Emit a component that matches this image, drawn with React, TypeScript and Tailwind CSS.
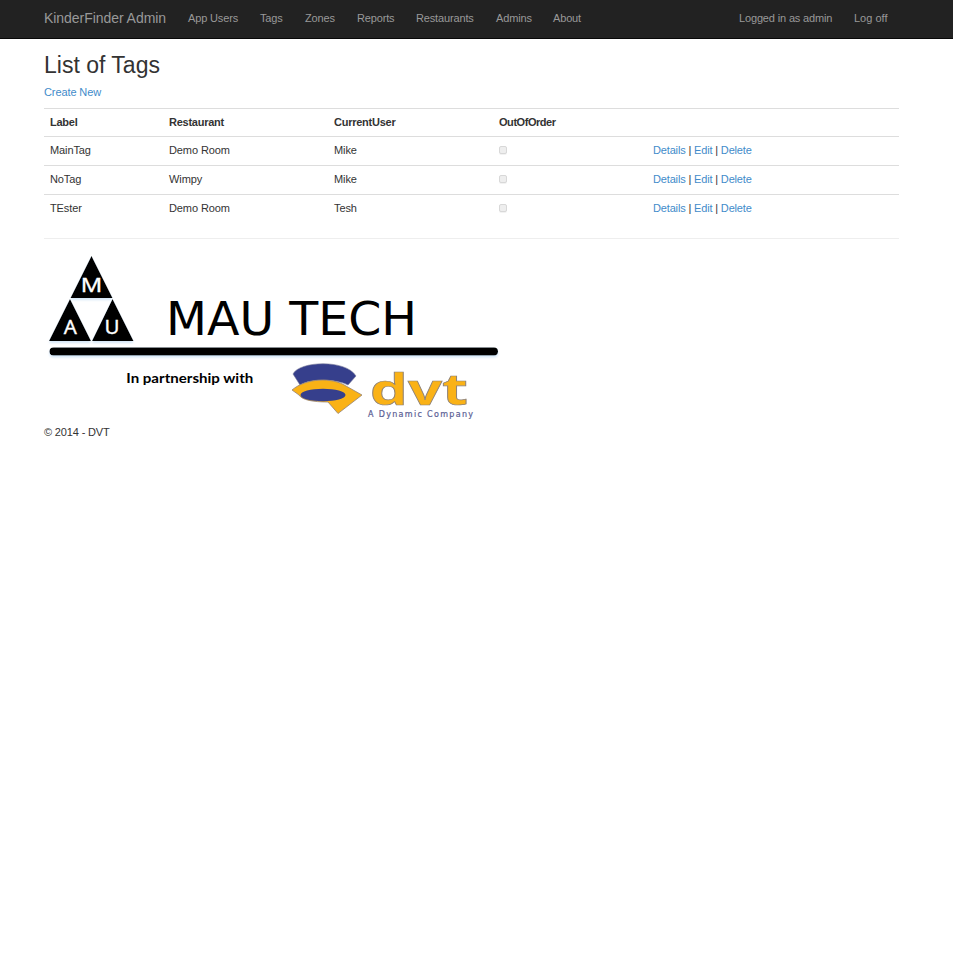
const navItems = [
  { label: 'App Users', box: 'w-[72px]' },
  { label: 'Tags', box: 'w-[45px]' },
  { label: 'Zones', box: 'w-[52px]' },
  { label: 'Reports', box: 'w-[59px]' },
  { label: 'Restaurants', box: 'w-[80px]' },
  { label: 'Admins', box: 'w-[57px]' },
  { label: 'About', box: 'w-[50px]' },
];

const tags = [
  { label: 'MainTag', restaurant: 'Demo Room', user: 'Mike' },
  { label: 'NoTag', restaurant: 'Wimpy', user: 'Mike' },
  { label: 'TEster', restaurant: 'Demo Room', user: 'Tesh' },
];

function Navbar() {
  return (
    <nav className="h-[39px] border-b border-[#080808] bg-[#222] pl-11 text-[#999]">
      <div className="flex h-[37px] w-[855px] items-center tracking-[-0.15px] whitespace-nowrap">
        <a className="w-[144px] text-[14px] tracking-[-0.05px]">KinderFinder Admin</a>
        {navItems.map((item) => (
          <a key={item.label} className={item.box}>{item.label}</a>
        ))}
        <a className="ml-auto w-[115px]">Logged in as admin</a>
        <a className="w-[45px] tracking-normal">Log off</a>
      </div>
    </nav>
  );
}

function TagTable() {
  return (
    <table className="mt-[8px] w-[855px] table-fixed border-collapse text-left">
      <colgroup>
        <col className="w-[119px]" />
        <col className="w-[165px]" />
        <col className="w-[165px]" />
        <col className="w-[154px]" />
        <col className="w-[252px]" />
      </colgroup>
      <thead>
        <tr className="h-[28px] border-t border-[#ddd] tracking-[-0.25px]">
          <th className="px-1.5 py-0">Label</th>
          <th className="px-1.5 py-0">Restaurant</th>
          <th className="px-1.5 py-0">CurrentUser</th>
          <th className="px-1.5 py-0 tracking-[-0.45px]">OutOfOrder</th>
          <th />
        </tr>
      </thead>
      <tbody>
        {tags.map((tag) => (
          <tr key={tag.label} className="h-[29px] border-t border-[#ddd] tracking-[-0.1px]">
            <td className="px-1.5 pt-0 pb-[2px]">{tag.label}</td>
            <td className="px-1.5 pt-0 pb-[2px]">{tag.restaurant}</td>
            <td className="px-1.5 pt-0 pb-[2px]">{tag.user}</td>
            <td className="px-1.5 pt-0 pb-[3px]">
              <span className="block h-[8px] w-[8px] rounded-[2px] border border-[#d8d8d8] bg-[#eee] shadow-[0_1px_0_#f2f2f2]" />
            </td>
            <td className="px-1.5 pt-0 pb-[2px] tracking-[-0.16px]">
              <a className="text-[#428bca]">Details</a> | <a className="text-[#428bca]">Edit</a> |{' '}
              <a className="text-[#428bca]">Delete</a>
            </td>
          </tr>
        ))}
      </tbody>
    </table>
  );
}

function Logo() {
  return (
    <svg className="block h-[177px] w-[460px]" viewBox="44 248 460 177">
      <defs>
        <filter id="soft" x="-5%" y="-10%" width="110%" height="130%">
          <feDropShadow dx="0" dy="2" stdDeviation="1" floodColor="#b9d7f2" floodOpacity="0.6" />
        </filter>
      </defs>
      <g filter="url(#soft)">
        <path d="M91.5 256L112.5 298H70.5Z M70 299L91 341H49Z M112.5 299L133.5 341H92Z" />
        <rect x="49.5" y="347.5" width="448.5" height="8" rx="4" />
      </g>
      <g fill="white" stroke="white" strokeWidth=".35" fontFamily="Noto Sans, sans-serif" fontSize="20.5">
        <text x="80.8" y="292" textLength="21.5" lengthAdjust="spacingAndGlyphs">M</text>
        <text x="63.7" y="333.6">A</text>
        <text x="104.6" y="333.6">U</text>
      </g>
      <text x="166" y="335" textLength="251" lengthAdjust="spacingAndGlyphs" fontFamily="DejaVu Sans, sans-serif" fontSize="47">MAU TECH</text>
      <text x="126.3" y="383" textLength="127" lengthAdjust="spacingAndGlyphs" className="font-['Lato',sans-serif] text-[14px] font-bold">In partnership with</text>
      <path d="M293 374C299 361 346 359 356 376L348 385C336 379 312 378 300 385Z" fill="#363f8c" stroke="#797b99" strokeWidth=".6" />
      <path d="M292 390C306 378 332 377 346 386L362 395L338 413.5L328 402C313 402 302 400 299 395Z" fill="#fab216" stroke="#948377" strokeWidth=".8" />
      <ellipse cx="323" cy="395" rx="22.5" ry="6.3" fill="#363f8c" />
      <text x="370" y="405" textLength="98" lengthAdjust="spacingAndGlyphs" fill="#fab216" stroke="#8c8077" strokeWidth=".7" fontFamily="Open Sans, sans-serif" fontWeight="700" fontSize="42.5">dvt</text>
      <text x="368" y="416.5" textLength="105" lengthAdjust="spacing" fill="#5b6095" stroke="#5b6095" strokeWidth=".2" fontFamily="DejaVu Sans, sans-serif" fontSize="8">A Dynamic Company</text>
    </svg>
  );
}

export default function App() {
  return (
    <div className="min-h-[955px] bg-white font-['Liberation_Sans',Arial,sans-serif] text-[11px] leading-[15px] text-[#333]">
      <Navbar />
      <main className="ml-11 w-[855px]">
        <h2 className="pt-[13px] text-[23px] leading-[26px]">List of Tags</h2>
        <a className="mt-[7px] block tracking-[-0.1px] text-[#428bca]">Create New</a>
        <TagTable />
        <hr className="mt-[14px] border-[#eee]" />
        <footer className="pt-[9px]">
          <Logo />
          <p className="tracking-[-0.15px]">© 2014 - DVT</p>
        </footer>
      </main>
    </div>
  );
}
